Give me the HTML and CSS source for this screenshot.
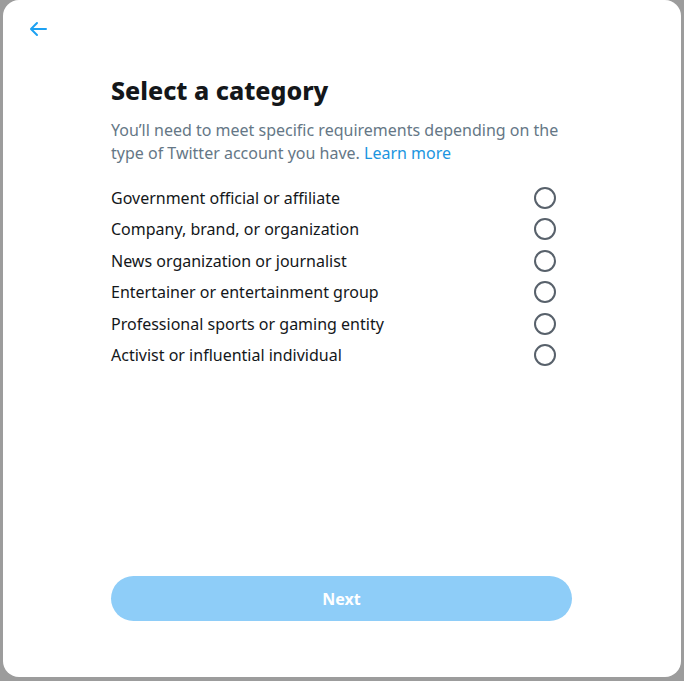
FILE: index.html
```html
<!DOCTYPE html>
<html lang="en">
<head>
<meta charset="utf-8">
<title>Select a category</title>
<link rel="stylesheet" href="styles.css">
</head>
<body>
<div class="backdrop">
  <div class="modal">
    <div class="modal-header">
      <button class="back" aria-label="Back">
        <svg viewBox="0 0 24 24" width="24" height="24"><path d="M20 11H7.414l4.293-4.293a1 1 0 0 0-1.414-1.414l-6 6a1 1 0 0 0 0 1.414l6 6a.996.996 0 0 0 1.414 0 1 1 0 0 0 0-1.414L7.414 13H20a1 1 0 1 0 0-2z" fill="#1da1f2"/></svg>
      </button>
    </div>
    <div class="modal-body">
      <h1 class="title">Select a category</h1>
      <p class="desc">You’ll need to meet specific requirements depending on the type of Twitter account you have. <a href="#" class="link">Learn more</a></p>
      <ul class="options">
        <li class="option"><span class="option-label">Government official or affiliate</span><span class="radio"></span></li>
        <li class="option"><span class="option-label">Company, brand, or organization</span><span class="radio"></span></li>
        <li class="option"><span class="option-label">News organization or journalist</span><span class="radio"></span></li>
        <li class="option"><span class="option-label">Entertainer or entertainment group</span><span class="radio"></span></li>
        <li class="option"><span class="option-label">Professional sports or gaming entity</span><span class="radio"></span></li>
        <li class="option"><span class="option-label">Activist or influential individual</span><span class="radio"></span></li>
      </ul>
      <div class="spacer"></div>
      <button class="next">Next</button>
    </div>
  </div>
</div>
</body>
</html>
```
FILE: styles.css
```css
html, body {
  margin: 0;
  padding: 0;
  height: 100%;
}
body {
  background: #9c9c9c;
  font-family: "Noto Sans", "Open Sans", sans-serif;
  overflow: hidden;
}
.backdrop {
  height: 681px;
  padding-left: 3px;
  box-sizing: border-box;
}
.modal {
  width: 678px;
  height: 677px;
  background: #fff;
  border-radius: 16px;
  display: flex;
  flex-direction: column;
}
.modal-header {
  height: 58px;
  display: flex;
  align-items: center;
  padding-left: 21px;
}
.back {
  width: 28px;
  height: 28px;
  padding: 0;
  border: 0;
  background: transparent;
  display: flex;
  align-items: center;
  justify-content: center;
}
.modal-body {
  flex: 1;
  display: flex;
  flex-direction: column;
  padding: 15px 109px 56px 108px;
}
.title {
  margin: 0;
  font-size: 25px;
  font-weight: 800;
  color: #14171a;
  line-height: 34px;
}
.desc {
  margin: 12px 0 0 0;
  font-size: 16px;
  line-height: 23px;
  color: #657786;
}
.link {
  color: #1b95e0;
  text-decoration: none;
}
.options {
  list-style: none;
  margin: 17px 0 0;
  padding: 0 16px 0 0;
}
.option {
  height: 31.5px;
  display: flex;
  align-items: center;
  justify-content: space-between;
  font-size: 16px;
  color: #14171a;
}
.radio {
  width: 18px;
  height: 18px;
  border: 2px solid #58616b;
  border-radius: 50%;
}
.spacer {
  flex: 1;
}
.next {
  height: 45px;
  border: 0;
  border-radius: 23px;
  background: #8ecdf8;
  color: #fff;
  font-family: inherit;
  font-weight: 700;
  font-size: 16px;
}
```
